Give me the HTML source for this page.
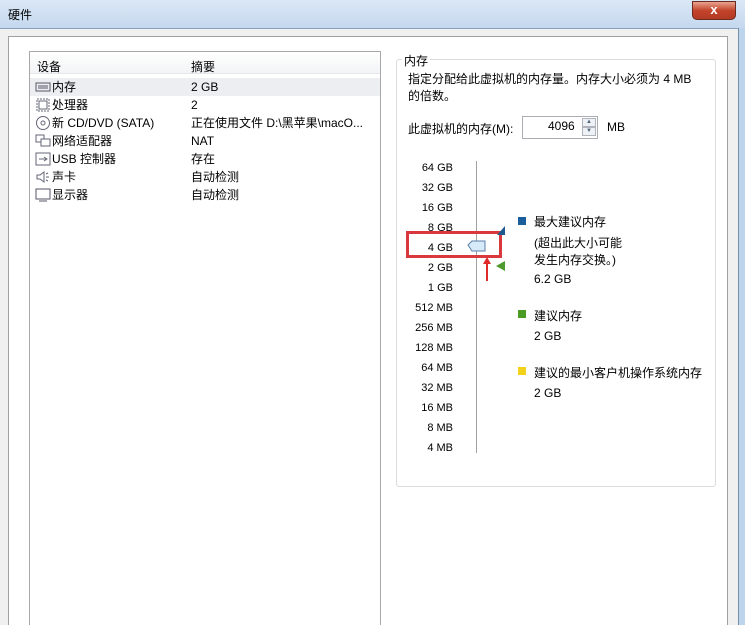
<!DOCTYPE html>
<html><head><meta charset="utf-8"><style>
*{margin:0;padding:0;box-sizing:border-box}
html,body{width:745px;height:625px;overflow:hidden}
body{background:#c9dcef;font-family:"Liberation Sans","Noto Sans CJK SC",sans-serif;font-size:12px;color:#000;position:relative}
.a{position:absolute;white-space:nowrap}
#title{left:0;top:0;width:745px;height:30px;background:linear-gradient(#dbe8f6,#c3d7ee)}
#frame{left:0;top:28px;width:738px;height:597px;background:#f0f0f0;border-top:1px solid #8aa0bb}
#inner{left:8px;top:36px;width:720px;height:589px;background:#fff;border:1px solid #a0a0a0;border-bottom:none}
#list{left:29px;top:51px;width:352px;height:574px;border:1px solid #a8a8a8;border-bottom:none;background:#fff}
</style></head><body>
<div class="a" id="title"></div>
<div class="a" style="left:8px;top:6px;font-size:12px">硬件</div>
<div class="a" style="left:692px;top:1px;width:44px;height:19px;border:1px solid #6d2a20;border-radius:0 0 5px 5px;background:linear-gradient(#e8a38f,#c4442c 50%,#b23a24);color:#fff;font-weight:bold;text-align:center;line-height:16px;font-size:13px">x</div>
<div class="a" id="frame"></div>
<div class="a" id="inner"></div>
<div class="a" style="left:738px;top:28px;width:7px;height:597px;background:#bcd4ec;border-left:1px solid #7a8fa8"></div>
<div class="a" id="list"></div>
<div class="a" style="left:30px;top:52px;width:350px;height:22px;background:linear-gradient(#fff,#f3f4f6);border-bottom:1px solid #e4e6ea"></div>
<div class="a" style="left:37px;top:58px">设备</div>
<div class="a" style="left:191px;top:58px">摘要</div>
<div class="a" style="left:30px;top:78px;width:350px;height:18px;background:#eceef1"></div>
<div class="a" style="left:35px;top:80px"><svg width="16" height="14"><rect x="1" y="3" width="14" height="8" fill="none" stroke="#556"/><line x1="3" y1="6" x2="13" y2="6" stroke="#556"/><line x1="3" y1="8" x2="13" y2="8" stroke="#556"/></svg></div>
<div class="a" style="left:35px;top:98px"><svg width="16" height="14"><rect x="2" y="1" width="12" height="12" fill="none" stroke="#667" stroke-dasharray="2 1"/><rect x="4" y="3" width="8" height="8" fill="none" stroke="#667"/></svg></div>
<div class="a" style="left:35px;top:115px"><svg width="16" height="16"><circle cx="8" cy="8" r="6.5" fill="none" stroke="#667"/><circle cx="8" cy="8" r="2" fill="none" stroke="#667"/></svg></div>
<div class="a" style="left:35px;top:134px"><svg width="16" height="14"><rect x="1" y="1" width="8" height="7" fill="none" stroke="#667"/><rect x="6" y="5" width="9" height="7" fill="#fff" stroke="#667"/></svg></div>
<div class="a" style="left:35px;top:152px"><svg width="16" height="14"><rect x="1" y="1" width="14" height="12" fill="none" stroke="#667"/><path d="M4 7h8M9 5l3 2-3 2" fill="none" stroke="#667"/></svg></div>
<div class="a" style="left:35px;top:170px"><svg width="16" height="14"><path d="M2 5h3l4-3v10l-4-3H2z" fill="none" stroke="#667"/><path d="M11 4l2-1M11 7h3M11 10l2 1" stroke="#667"/></svg></div>
<div class="a" style="left:35px;top:188px"><svg width="16" height="14"><rect x="1" y="1" width="14" height="10" fill="none" stroke="#556"/><path d="M4 13h8" stroke="#556"/></svg></div>
<div class="a" style="left:52px;top:78px;line-height:18px">内存<br>处理器<br>新 CD/DVD (SATA)<br>网络适配器<br>USB 控制器<br>声卡<br>显示器</div>
<div class="a" style="left:191px;top:78px;line-height:18px">2 GB<br>2<br>正在使用文件 D:\黑苹果\macO...<br>NAT<br>存在<br>自动检测<br>自动检测</div>

<div class="a" style="left:396px;top:59px;width:320px;height:428px;border:1px solid #dcdcdc;border-radius:3px"></div>
<div class="a" style="left:402px;top:52px;background:#fff;padding:0 2px">内存</div>
<div class="a" style="left:408px;top:71px;line-height:17px">指定分配给此虚拟机的内存量。内存大小必须为 4 MB<br>的倍数。</div>
<div class="a" style="left:408px;top:120px">此虚拟机的内存(M):</div>
<div class="a" style="left:522px;top:116px;width:76px;height:23px;border:1px solid #abadb3;background:#fff"></div>
<div class="a" style="left:548px;top:119px">4096</div>
<div class="a" style="left:582px;top:118px;width:14px;height:9px;border:1px solid #b0b4bc;background:#eef2f7;font-size:6px;text-align:center;color:#567">▲</div>
<div class="a" style="left:582px;top:127px;width:14px;height:9px;border:1px solid #b0b4bc;background:#eef2f7;font-size:6px;text-align:center;color:#567">▼</div>
<div class="a" style="left:607px;top:120px">MB</div>

<div class="a" style="left:400px;top:158px;width:53px;text-align:right;font-size:11px;line-height:20px">64 GB<br>32 GB<br>16 GB<br>8 GB<br>4 GB<br>2 GB<br>1 GB<br>512 MB<br>256 MB<br>128 MB<br>64 MB<br>32 MB<br>16 MB<br>8 MB<br>4 MB</div>
<div class="a" style="left:476px;top:161px;width:1px;height:292px;background:#a0a0a0"></div>
<div class="a" style="left:406px;top:231px;width:96px;height:27px;border:3px solid #d9383c"></div>
<svg class="a" style="left:467px;top:239px" width="22" height="14"><path d="M1 6l4-4h13v10H5z" fill="#d7eaf9" stroke="#5a7fa8"/></svg>
<svg class="a" style="left:482px;top:256px" width="10" height="26"><path d="M5 1l4 7H6v17H4V8H1z" fill="#e02b2b"/></svg>
<svg class="a" style="left:497px;top:226px" width="10" height="10"><path d="M8 0v9H0z" fill="#1f5a8f"/></svg>
<svg class="a" style="left:496px;top:261px" width="10" height="10"><path d="M9 0v10L0 5z" fill="#4f9a2d"/></svg>

<div class="a" style="left:518px;top:217px;width:8px;height:8px;background:#1a5f9c"></div>
<div class="a" style="left:534px;top:214px;line-height:17px">最大建议内存</div>
<div class="a" style="left:534px;top:235px;line-height:17px">(超出此大小可能<br>发生内存交换。)</div>
<div class="a" style="left:534px;top:272px">6.2 GB</div>
<div class="a" style="left:518px;top:310px;width:8px;height:8px;background:#4b9a24"></div>
<div class="a" style="left:534px;top:307px">建议内存</div>
<div class="a" style="left:534px;top:329px">2 GB</div>
<div class="a" style="left:518px;top:367px;width:8px;height:8px;background:#f2d21a"></div>
<div class="a" style="left:534px;top:364px">建议的最小客户机操作系统内存</div>
<div class="a" style="left:534px;top:386px">2 GB</div>
</body></html>
